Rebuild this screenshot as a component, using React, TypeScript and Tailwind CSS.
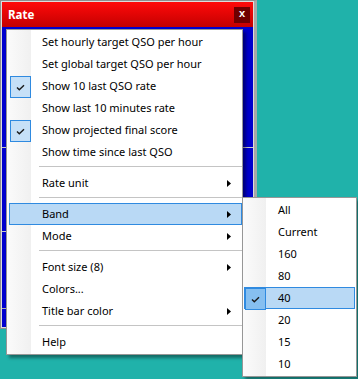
import { ReactNode } from "react";

type Item =
  | { kind: "sep" }
  | { kind: "item"; label: string; checked?: boolean; sub?: boolean; active?: boolean };

const mainItems: Item[] = [
  { kind: "item", label: "Set hourly target QSO per hour" },
  { kind: "item", label: "Set global target QSO per hour" },
  { kind: "item", label: "Show 10 last QSO rate", checked: true },
  { kind: "item", label: "Show last 10 minutes rate" },
  { kind: "item", label: "Show projected final score", checked: true },
  { kind: "item", label: "Show time since last QSO" },
  { kind: "sep" },
  { kind: "item", label: "Rate unit", sub: true },
  { kind: "sep" },
  { kind: "item", label: "Band", sub: true, active: true },
  { kind: "item", label: "Mode", sub: true },
  { kind: "sep" },
  { kind: "item", label: "Font size (8)", sub: true },
  { kind: "item", label: "Colors..." },
  { kind: "item", label: "Title bar color", sub: true },
  { kind: "sep" },
  { kind: "item", label: "Help" },
];

const bands = ["All", "Current", "160", "80", "40", "20", "15", "10"];

function Check({ dark }: { dark?: boolean }) {
  return (
    <div
      className={`absolute left-0 top-0 w-[21px] h-[22px] border border-[#2f8ae0] flex items-center justify-center ${
        dark ? "bg-[#86bff0]" : "bg-[#c6e0f7]"
      }`}
    >
      <svg width="9" height="7" viewBox="0 0 9 7">
        <path d="M1 3.5 L3.3 5.8 L8 1.2" fill="none" stroke="#1a1a1a" strokeWidth="1.4" />
      </svg>
    </div>
  );
}

function Arrow() {
  return (
    <svg width="4" height="7" viewBox="0 0 4 7" className="absolute right-[10px] top-[7px]">
      <path d="M0 0 L4 3.5 L0 7 Z" fill="#000" />
    </svg>
  );
}

function Row({ children, active, className = "" }: { children: ReactNode; active?: boolean; className?: string }) {
  return (
    <div
      className={`relative h-[22px] flex items-center ${className} ${
        active ? "bg-[#b9d9f5] border border-[#2f8ae0]" : "border border-transparent"
      }`}
    >
      {children}
    </div>
  );
}

export default function App() {
  return (
    <div
      className="relative w-[358px] h-[379px] bg-[#20b2aa] overflow-hidden text-[11px] text-black"
      style={{ fontFamily: '"Noto Sans", "Open Sans", sans-serif' }}
    >
      {/* Rate window */}
      <div className="w-[257px] h-[329px] border border-[#8e8e8e] border-r-[3px] border-r-[#a8a8a8] bg-[#dcdcdc] p-px flex flex-col">
        <div className="h-[25px] flex items-center justify-between pl-[6px] pr-[3px] bg-[linear-gradient(to_bottom,#ff0a0a,#c40000)]">
          <span className="text-white font-bold text-[11.5px] leading-none">Rate</span>
          <span
            className="w-[16px] h-[16px] bg-[#6e0000] text-white text-[11px] font-bold flex items-center justify-center leading-none"
            style={{ fontFamily: '"Liberation Mono", monospace' }}
          >
            x
          </span>
        </div>
        <div className="flex-1 bg-[#0000cd] flex flex-col">
          <div className="h-[121px] border-b border-[#c8c8c8]" />
          <div className="h-[84px] border-b border-[#c8c8c8]" />
          <div className="h-[77px] border-b border-[#b0b0b0]" />
        </div>
      </div>

      {/* Context menu */}
      <div className="absolute left-[6px] top-[29px] w-[237px] border border-[#979797] bg-[linear-gradient(to_right,#fbfbfb_0px,#f0f0f0_24px,#ffffff_24px)] py-px shadow-[3px_3px_3px_rgba(0,0,0,0.4)]">
        {mainItems.map((it, i) =>
          it.kind === "sep" ? (
            <div key={i} className="h-[6px] pl-[32px]">
              <div className="mt-[3px] h-px bg-[#c4c4c4]" />
            </div>
          ) : (
            <Row key={i} active={it.active} className="ml-[2px]">
              {it.checked && <Check />}
              <span className="pl-[32px] whitespace-nowrap">{it.label}</span>
              {it.sub && <Arrow />}
            </Row>
          )
        )}
      </div>

      {/* Band submenu */}
      <div className="absolute left-[242px] top-[197px] w-[115px] border border-[#979797] bg-[linear-gradient(to_right,#fbfbfb_0px,#f0f0f0_23px,#ffffff_23px)] py-px shadow-[3px_3px_3px_rgba(0,0,0,0.4)]">
        {bands.map((b) => (
          <Row key={b} active={b === "40"} className="mx-px">
            {b === "40" && <Check dark />}
            <span className="pl-[33px]">{b}</span>
          </Row>
        ))}
      </div>
    </div>
  );
}
